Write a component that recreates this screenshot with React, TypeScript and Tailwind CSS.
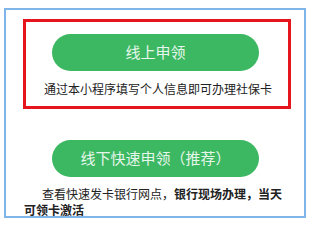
import React from 'react'

const GreenButton: React.FC<{ label: string; className?: string }> = ({ label, className = '' }) => (
  <button
    className={`w-[207px] h-[37px] rounded-full bg-[#3cb862] text-[15px] text-[#e6f6ea] flex items-center justify-center ${className}`}
  >
    {label}
  </button>
)

export default function App() {
  return (
    <div className="w-[313px] h-[230px] bg-white pt-[8px] pl-[4px] font-['Noto_Sans_CJK_SC',sans-serif] text-[#222]">
      <div className="w-[302px] h-[210px] border-2 border-[#7fb5e8] pt-[9px]">
        {/* Online */}
        <div className="ml-[17px] w-[268px] h-[90px] border-[3px] border-[#e6141b] pt-[12px] pl-[26px]">
          <GreenButton label="线上申领" />
          <p className="mt-[9px] w-[207px] text-center text-[12px] leading-[17px] whitespace-nowrap">
            <span className="inline-block -ml-[8px]">通过本小程序填写个人信息即可办理社保卡</span>
          </p>
        </div>

        {/* Offline */}
        <div className="mt-[31px] pl-[46px]">
          <GreenButton label="线下快速申领（推荐）" className="h-[36px]" />
        </div>
        <div className="mt-[9px] ml-[18px] w-[265px] text-[12px] leading-[16px]">
          <p className="indent-[18px]">
            查看快速发卡银行网点，<b className="font-bold">银行现场办理，当天</b>
          </p>
          <p className="font-bold">可领卡激活</p>
        </div>
      </div>
    </div>
  )
}
